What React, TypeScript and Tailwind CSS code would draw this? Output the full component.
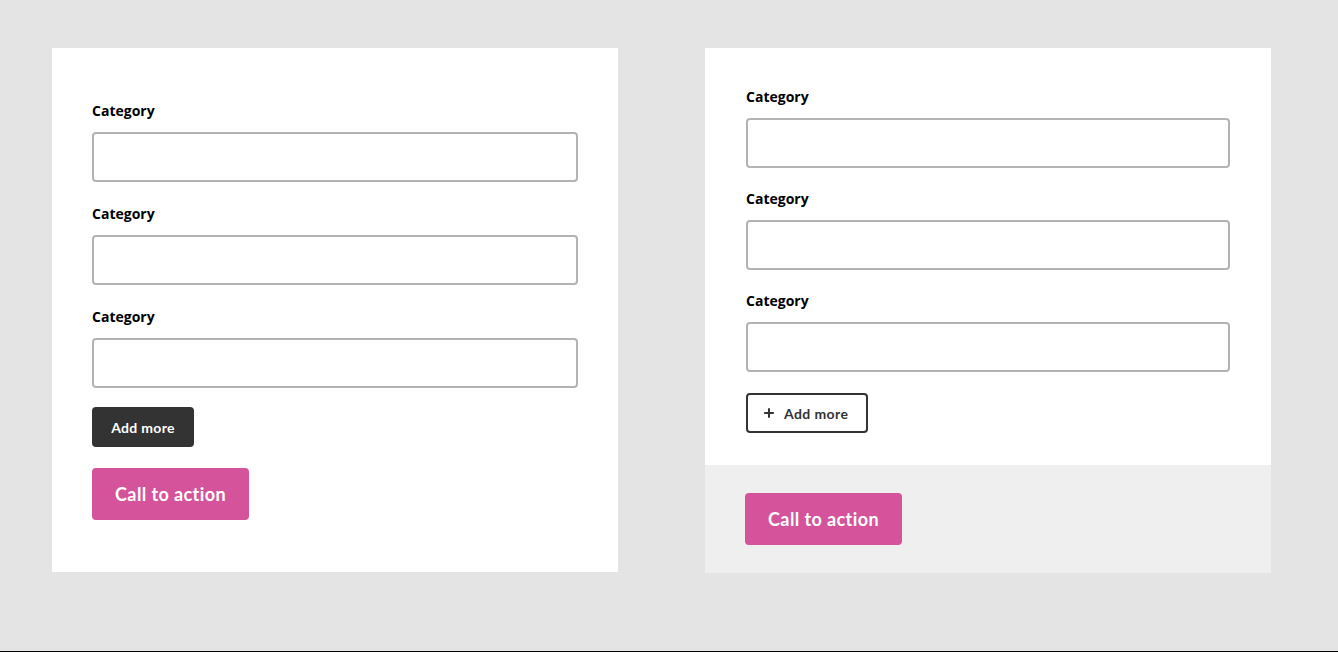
import { Plus } from "lucide-react";

const labelFont = { fontFamily: '"Open Sans", "Noto Sans", sans-serif' };
const btnFont = { fontFamily: 'Lato, "Liberation Sans", sans-serif' };

function Field() {
  return (
    <div className="flex flex-col">
      <label className="text-[14px] leading-[20px] font-bold text-black" style={labelFont}>
        Category
      </label>
      <input
        type="text"
        className="mt-[11px] h-[50px] w-full rounded-[4px] border-2 border-[#b3b3b3] bg-white px-3 outline-none"
      />
    </div>
  );
}

function CtaButton() {
  return (
    <button
      className="block h-[52px] w-[157px] rounded-[4px] bg-[#d4539a] text-[18px] font-bold tracking-[0.4px] text-white"
      style={btnFont}
    >
      Call to action
    </button>
  );
}

export default function App() {
  return (
    <div className="h-[652px] w-full border-b border-black bg-[#e4e4e4]">
      <div className="flex items-start gap-[87px] pl-[52px] pt-[48px]">
        {/* Variante 1 */}
        <div className="w-[566px] bg-white px-[40px] pt-[53px] pb-[52px]">
          <div className="flex flex-col gap-[22px]">
            <Field />
            <Field />
            <Field />
          </div>
          <button
            className="mt-[19px] block h-[40px] w-[102px] rounded-[4px] bg-[#333333] text-[14px] font-bold tracking-[0.3px] text-white"
            style={btnFont}
          >
            Add more
          </button>
          <div className="mt-[21px]">
            <CtaButton />
          </div>
        </div>

        {/* Variante 2 */}
        <div className="w-[566px] bg-white">
          <div className="px-[41px] pt-[39px] pb-[32px]">
            <div className="flex flex-col gap-[21px]">
              <Field />
              <Field />
              <Field />
            </div>
            <button
              className="mt-[21px] flex h-[40px] w-[122px] items-center gap-[8px] rounded-[4px] border-2 border-[#333333] bg-white pl-[14px] text-[14px] font-bold tracking-[0.4px] text-[#333333]"
              style={btnFont}
            >
              <Plus size={14} strokeWidth={3.4} />
              Add more
            </button>
          </div>
          <div className="bg-[#efefef] px-[40px] py-[28px]">
            <CtaButton />
          </div>
        </div>
      </div>
    </div>
  );
}
